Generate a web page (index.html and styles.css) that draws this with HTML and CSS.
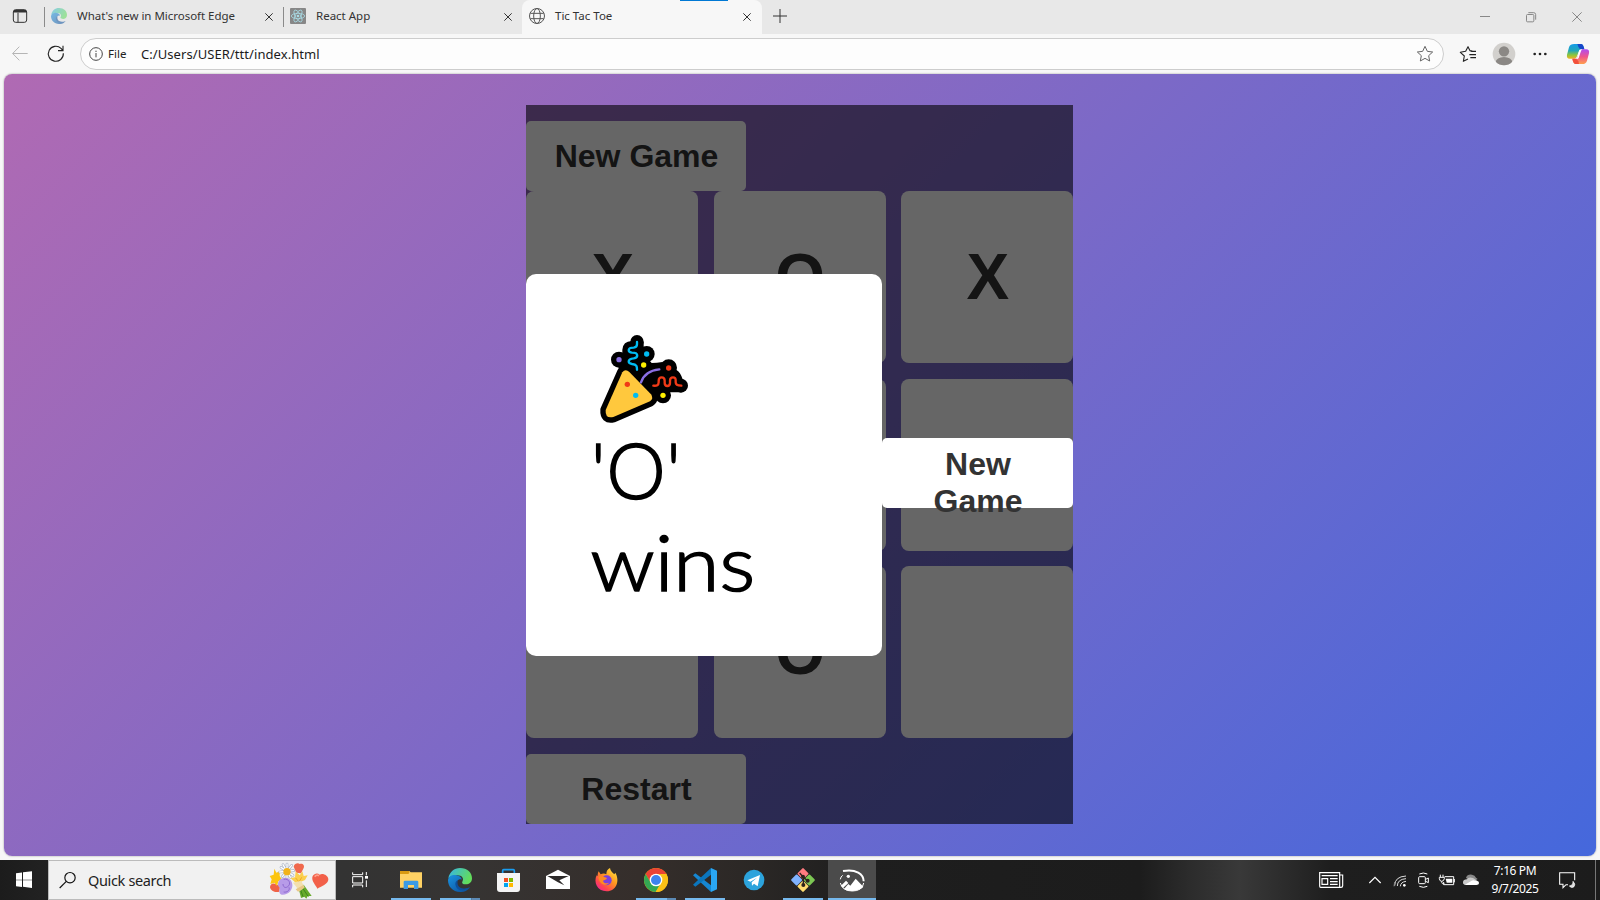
FILE: index.html
```html
<!DOCTYPE html>
<html lang="en">
<head>
<meta charset="utf-8">
<title>Tic Tac Toe</title>
<link rel="stylesheet" href="styles.css">
</head>
<body>
<header class="tabstrip">
  <svg class="tab-menu" viewBox="0 0 132 102" fill="none" stroke="#333" stroke-width="3"><rect x="40" y="29" width="40" height="38" rx="7"/><path d="M40 36h40M54 38v29" /><path d="M42 33h36" stroke-width="6"/></svg>
  <div class="tab">
    <svg class="favicon" viewBox="0 0 72 72"><defs><linearGradient id="eg" x1="0" y1="0" x2="1" y2=".4"><stop offset="0" stop-color="#36b4e8"/><stop offset="1" stop-color="#62dc5c"/></linearGradient><linearGradient id="eb" x1="0" y1="0" x2="1" y2="1"><stop offset="0" stop-color="#1a93e0"/><stop offset="1" stop-color="#0b4a96"/></linearGradient>
    <g id="edge"><path d="M1 30C5 12 18 0 36 0c22 0 36 14 36 31 0 12-9 18-18 18-10 0-13-4-11-8 6-10-2-19-14-19C17 22 6 26 1 30z" fill="url(#eg)"/><path d="M0 36c3-14 17-16 25-14 10 1 16 7 16 13-9-4-18 5-14 16 5 14 22 16 39 7C57 70 47 73 36 72 14 71 0 56 0 36z" fill="url(#eb)"/><path d="M29 37c-8 4-9 13-3 22 8 11 26 10 40-1-16 8-35 3-37-10-1-4 0-8 0-11z" fill="#0d4f9c"/></g></defs><use href="#edge"/></svg>
    <span class="tab-title t-edge">What's new in Microsoft Edge</span>
    <svg class="x" viewBox="0 0 30 30"><path d="M4 4l22 22M26 4L4 26"/></svg>
  </div>
  <div class="tab">
    <svg class="favicon gray" viewBox="0 0 48 48"><rect width="48" height="48" rx="3" fill="#878787"/><g fill="none" stroke="#a9dce6" stroke-width="2.4"><ellipse cx="24" cy="24" rx="20" ry="8"/><ellipse cx="24" cy="24" rx="20" ry="8" transform="rotate(60 24 24)"/><ellipse cx="24" cy="24" rx="20" ry="8" transform="rotate(120 24 24)"/></g><circle cx="24" cy="24" r="4" fill="#a9dce6"/></svg>
    <span class="tab-title">React App</span>
    <svg class="x" viewBox="0 0 30 30"><path d="M4 4l22 22M26 4L4 26"/></svg>
  </div>
  <div class="tab active">
    <svg class="favicon globe" viewBox="0 0 48 48" fill="none" stroke="#555" stroke-width="3"><circle cx="24" cy="24" r="22.5"/><ellipse cx="24" cy="24" rx="10" ry="22.5"/><path d="M4 16h40M4 32h40"/></svg>
    <span class="tab-title">Tic Tac Toe</span>
    <svg class="x" viewBox="0 0 30 30"><path d="M4 4l22 22M26 4L4 26"/></svg>
  </div>
  <svg class="plus" viewBox="0 0 42 42"><path d="M21 0v42M0 21h42" stroke="#333" stroke-width="3"/></svg>
  <div class="controls">
    <svg viewBox="246 0 138 102"><path d="M300 49.500h30"/></svg>
    <svg viewBox="384 0 138 102"><rect x="439.500" y="43.500" width="22" height="22" rx="3"/><path d="M445 38h16q6 0 6 6v15"/></svg>
    <svg viewBox="522 0 138 102"><path d="M577 37l28 28M605 37l-28 28"/></svg>
  </div>
</header>
<div class="toolbar">
  <svg class="tool" viewBox="0 102 120 120" fill="none" stroke="#b5b5b5" stroke-width="3"><path d="M83 160.500H38M58 140l-20 20.500 20 20.500"/></svg>
  <svg class="tool" viewBox="120 102 120 120" fill="none" stroke="#222" stroke-width="3.300"><path d="M190 160a22.500 22.500 0 1 1-7-15l6 7M189 137v15h-15"/></svg>
  <div class="address">
    <svg class="info" viewBox="0 0 42 42" fill="none" stroke="#444" stroke-width="3"><circle cx="21" cy="21" r="19"/><path d="M21 18v13M21 11v4"/></svg>
    <span class="scheme">File</span>
    <span class="url">C:/Users/USER/ttt/index.html</span>
    <svg class="star" viewBox="108 136 54 54" fill="none" stroke="#666" stroke-width="3" stroke-linejoin="round"><path d="M135 140l7 15 16 2-12 11 3 16-14-8-14 8 3-16-12-11 16-2z"/></svg>
  </div>
  <svg class="tool" viewBox="192 102 120 120" fill="none" stroke="#222" stroke-width="3.300" stroke-linejoin="round"><path d="M277 153l-7-1-6-12-7 14-16 3 12 11-3 16 14-7M272 154h16M268 164h20M271 173h17"/></svg>
  <svg class="tool" viewBox="312 102 120 120"><clipPath id="av"><circle cx="372" cy="162" r="34"/></clipPath><circle cx="372" cy="162" r="34" fill="#d2d0cd"/><g fill="#8b8885"><circle cx="372" cy="154" r="15.500"/><ellipse cx="372" cy="187" rx="25" ry="16" clip-path="url(#av)"/></g></svg>
  <svg class="tool dots" viewBox="432 102 108 120" fill="#222"><circle cx="464" cy="162" r="4"/><circle cx="480" cy="162" r="4"/><circle cx="496" cy="162" r="4"/></svg>
  <svg class="tool" viewBox="540 102 120 120"><defs><linearGradient id="c1" x1="0" y1="0" x2="0" y2="1"><stop offset="0" stop-color="#159be8"/><stop offset=".45" stop-color="#22a7b8"/><stop offset=".75" stop-color="#8cc63c"/><stop offset="1" stop-color="#f0b323"/></linearGradient><linearGradient id="c2" x1="0" y1="0" x2="0" y2="1"><stop offset="0" stop-color="#b04cf0"/><stop offset=".5" stop-color="#f0568c"/><stop offset="1" stop-color="#ffa04d"/></linearGradient></defs><path d="M583 132h20q7 0 10 16h-9q-6 0-8 7l-5 14q-2 7-8 7h-14q-10 0-8-12l6-22q3-10 16-10z" fill="url(#c1)"/><path d="M592 132h11q7 0 10 16h-8q-7 0-10-8z" fill="#1747c9"/><path d="M607 192h-20q-7 0-10-16h9q5 0 7-7l6-14q2-7 8-7h12q10 0 8 12l-6 22q-3 10-14 10z" fill="url(#c2)"/><path d="M597 192h-10q-7 0-10-16h8q7 0 10 8z" fill="#f2503c"/><path d="M598 150q5-2 9-2-4 3-5 8l-6 18q-2 4-8 3 4-3 5-8z" fill="#fff"/></svg>
</div>

<div class="frame">
<main class="page">
  <div class="game">
    <button class="btn">New Game</button>
    <div class="board">
      <div class="cell">X</div><div class="cell">O</div><div class="cell">X</div>
      <div class="cell"></div><div class="cell"></div><div class="cell"></div>
      <div class="cell"></div><div class="cell">O</div><div class="cell"></div>
    </div>
    <button class="btn restart">Restart</button>
    <div class="overlay">
      <div class="message">
        <svg class="popper" viewBox="246 35 300 270">
          <path d="M337 156Q346 144 358 155L423 222Q432 235 420 243L310 290Q285 296 287 269z" stroke="#000" stroke-width="32" stroke-linejoin="round"/>
          <circle cx="327" cy="118" r="24"/><circle cx="410" cy="101" r="24"/><circle cx="381" cy="64" r="20"/><circle cx="476" cy="142" r="25"/><circle cx="513" cy="196" r="21"/><circle cx="459" cy="225" r="24"/>
          <path d="M337 98V88Q339 63 365 62L401 64V100L425 128Q441 128 457 125L499 149Q511 155 518 177L514 216H480L440 240H400L326 155V138Q332 139 337 130z"/>
          <path d="M337 156Q346 144 358 155L423 222Q432 235 420 243L310 290Q285 296 287 269z" fill="#ffc83d"/>
          <g fill="none" stroke-linecap="round" stroke-width="7"><path d="M381 65v7q0 9-10 10c-20 0-18 14-5 15 20 0 20 14 5 17-20 2-18 15-5 17 15 1 15 8 15 17" stroke="#00bcf2"/><path d="M393 186Q404 152 448 147" stroke="#8b6fe3"/><path d="M430 196q16 2 16-10v-5q0-10 9-10t9 10v7q0 9 8 9t8-9v-7q0-10 9-10t8 10v5q0 10 17 10" stroke="#f03a17"/></g>
          <circle cx="327" cy="118" r="8" fill="#8b6fe3"/><g fill="#00bcf2"><circle cx="410" cy="101" r="8"/><circle cx="377" cy="225" r="8"/></g><g fill="#fff100"><circle cx="401" cy="134" r="8"/><circle cx="459" cy="225" r="8"/></g><g fill="#f03a17"><circle cx="476" cy="143" r="8"/><circle cx="352" cy="192" r="8"/></g>
        </svg>
        <div class="line line-o">'O'</div>
        <div class="line line-w">wins</div>
      </div>
      <button class="btn again">New Game</button>
    </div>
  </div>
</main>
</div>

<footer class="taskbar">
  <svg class="start" viewBox="0 30 144 120" fill="#fff"><path d="M48 70l18-2.500V89H48zM69 67l27-3v25H69zM48 91h18v20l-18-2.500zM69 91h27v23l-27-3.500z"/></svg>
  <div class="search">
    <svg class="lens" viewBox="175 60 60 60" fill="none" stroke="#111" stroke-width="3.500"><circle cx="211" cy="83" r="15.500"/><path d="M200 94l-20 20"/></svg>
    <span class="search-text">Quick search</span>
    <svg class="flowers" viewBox="800 33 200 114">
      <path d="M894 112l8 32 10-4 6 6 4-8 12 0-24-34z" fill="#67ab2a"/><path d="M898 112l10 28M904 110l20 30" stroke="#3f8420" stroke-width="3" fill="none"/>
      <path d="M880 50c2-10 14-12 18-8 8-4 16 4 12 12l-8 16-14-2z" fill="#f0694d"/>
      <path d="M809 112c0-10 10-14 18-9l12 4-2 18c-12 4-26-2-28-13z" fill="#ef6247"/>
      <path d="M822 56l6 12 10-4v14l6 10-10 6-4 14-8-10-12 4 4-14-6-10 12-4z" fill="#fcc510"/>
      <g fill="none" stroke="#aab4c4" stroke-width="8" stroke-linecap="round"><path d="M860 42v42M842 52l36 24M838 66l42-4M846 80l28-34M848 44l22 38"/></g><g stroke="#fff" stroke-width="4" stroke-linecap="round"><path d="M860 42v42M842 52l36 24M838 66l42-4M846 80l28-34M848 44l22 38"/></g><circle cx="860" cy="65" r="11" fill="#f2b21a"/>
      <path d="M870 84l14-2 2-18 12 12 8-12 4 14 12-2-8 14-14 6-14 2z" fill="#fbcf4d"/><path d="M886 84l10 12 8-14" fill="none" stroke="#efaa23" stroke-width="3"/>
      <path d="M878 98l24-6 10 18-14 14z" fill="#f3dfae"/><path d="M886 118l22-12 5 7-20 12z" fill="#e8c784"/>
      <path d="M836 92c12-14 34-10 39 6 6 20-12 38-31 36-8-2-8-12-5-20-7-6-8-14-3-22z" fill="#b79be8"/><path d="M850 88c16-4 24 14 12 22-8 6-14 0-14-8M866 112c4 10-8 16-16 14" fill="none" stroke="#8d68cf" stroke-width="3"/>
      <path d="M937 78c5-8 15-10 21-4 10-5 25 2 26 14 0 14-22 22-33 28-4-10-20-24-14-38z" fill="#f26049"/><path d="M943 80c4-5 9-5 13-3" stroke="#ffa08a" stroke-width="5" fill="none"/>
    </svg>
  </div>
  <svg class="taskview" viewBox="1008 30 153 120" fill="none" stroke="#fff" stroke-width="3"><path d="M1058 67v7h30v-7M1058 112v-7h30v7M1058 80h30v19h-30zM1099 66v10M1099 91v20"/><path d="M1095 82h9" stroke-width="8"/></svg>

  <svg class="app" viewBox="21 30 147 120"><path d="M60 63h28l4 4h34v46H60z" fill="#ffd264"/><path d="M60 63h28v6l-3 3H60z" fill="#d99a12"/><path d="M71 117V96q0-4 4-4h36q4 0 4 4v21h-13v-12H84v12z" fill="#3a9ae4"/><path class="run" d="M33 144h120v6H33z"/></svg>
  <svg class="app" viewBox="168 30 147 120"><use href="#edge" x="204" y="54"/><path class="run" d="M180 144h94v6h-94z"/><path d="M274 144h26v6h-26z" fill="#5c8ab5"/></svg>
  <svg class="app" viewBox="315 30 147 120"><path d="M368 72V62q0-3 3-3h29q3 0 3 3v10" fill="none" stroke="#1a9df0" stroke-width="5"/><path d="M351 69h69v48q0 9-9 9h-51q-9 0-9-9z" fill="#f4f4f4"/><path d="M372 84h12v12h-12z" fill="#f25022"/><path d="M387 84h12v12h-12z" fill="#7fba00"/><path d="M372 99h12v12h-12z" fill="#00a4ef"/><path d="M387 99h12v12h-12z" fill="#ffb900"/></svg>
  <svg class="app" viewBox="462 30 147 120"><path d="M498 78l36-19 36 19v39h-72z" fill="#fff"/><path d="M502 78h64l-28 13 15 15-19-9z" fill="#2d2a29"/></svg>
  <svg class="app" viewBox="609 30 147 120"><defs><linearGradient id="ff" x1="1" y1="0" x2=".2" y2="1"><stop offset="0" stop-color="#fff04a"/><stop offset=".45" stop-color="#ff9a1f"/><stop offset=".8" stop-color="#ff4450"/><stop offset="1" stop-color="#f0249a"/></linearGradient></defs><path d="M656 64l6 9c6-3 12-3 17 0 0-10 4-16 11-19 1 9 7 13 13 19l3-5c14 24 4 55-26 56-29 0-40-28-30-48l3 2c0-6 1-10 3-14z" fill="url(#ff)"/><circle cx="680" cy="91" r="15" fill="#7a3fe0"/><path d="M655 80c8-4 15 0 19 2 6 1 9 2 5 6l-10 4c2 8 10 10 18 6-8 12-30 6-32-18z" fill="#ff8a22"/></svg>
  <svg class="app" viewBox="-24 30 147 120"><g transform="translate(48 90)"><circle r="36" fill="#fbbc05"/><path d="M-31.200-18A36 36 0 0 1 31.200-18H0L-15.600 9z" fill="#ea4335"/><path d="M-31.200-18L-14 11 0 18 14 10-1 36A36 36 0 0 1-31.200-18z" fill="#34a853"/><path d="M31.200-18A36 36 0 0 1-1 36L15 10V-18z" fill="#fbc116"/><circle r="19" fill="#fff"/><circle r="15" fill="#3d83ee"/></g><path class="run" d="M-12 144h93v6h-93z"/><path d="M81 144h27v6H81z" fill="#5c8ab5"/></svg>
  <svg class="app" viewBox="123 30 147 120"><path d="M159 76l7-6 51 39-4 17z" fill="#1687d2"/><path d="M159 104l7 6 51-39-4-17z" fill="#0b76bd"/><path d="M213 54l18 8v56l-18 8z" fill="#2aa6f2"/><path class="run" d="M135 144h120v6H135z"/></svg>
  <svg class="app" viewBox="270 30 147 120"><circle cx="342" cy="90" r="31" fill="#2ca3dc"/><path d="M322 91l38-16-7 34-11-8-6 6-1-10 16-14-20 12z" fill="#fff"/></svg>
  <svg class="app" viewBox="417 30 147 120"><g transform="rotate(45 489 90)"><rect x="463" y="64" width="25" height="25" rx="3" fill="#ff7b80"/><rect x="490" y="64" width="25" height="25" rx="3" fill="#7cc653"/><rect x="463" y="91" width="25" height="25" rx="3" fill="#80b3ff"/><rect x="490" y="91" width="25" height="25" rx="3" fill="#ffdc70"/></g><path d="M479 69l11 13v23M490 81l12 11" fill="none" stroke="#2b211d" stroke-width="4"/><g fill="#2b211d"><circle cx="489" cy="80" r="6"/><circle cx="490" cy="105" r="6"/><circle cx="503" cy="92" r="6"/></g><path class="run" d="M429 144h120v6H429z"/></svg>
  <svg class="app on" viewBox="564 30 144 120"><path d="M609 63C648 56 671 72 671 94" fill="none" stroke="#fff" stroke-width="6"/><path d="M601 88q1-8 7-12M601 99q6 24 36 24t34-24" fill="none" stroke="#fff" stroke-width="3"/><circle cx="625" cy="79" r="5" fill="#fff"/><path d="M603 107l15-15 7 7-16 15zM612 117l13-15 6 5 16-21 23 24c-8 12-46 18-58 7z" fill="#fff"/><path class="run" d="M564 144h144v6H564z"/></svg>

  <div class="tray">
    <svg class="news" viewBox="30 30 135 120" fill="none" stroke="#fff" stroke-width="3.500"><path d="M59 68h60v44H62q-3 0-3-4zM119 75h9v32q0 5-5 5h-6M65 77h48M66 86h17v17H66zM90 86h23M90 95h23M90 103h23"/></svg>
    <svg class="chev" viewBox="180 30 90 120" fill="none" stroke="#fff" stroke-width="3.500"><path d="M208 99l17-17 17 17"/></svg>
    <svg class="wifi" viewBox="270 30 60 120" fill="none" stroke="#ddd" stroke-width="3"><path d="M284 107q0-27 34-29M292 108q0-20 26-22M301 109q1-13 17-15"/><path d="M284 96l-2 13" stroke="#888"/><circle cx="313" cy="106" r="4" fill="#fff" stroke="none"/></svg>
    <svg class="meet" viewBox="330 30 75 120" fill="none" stroke="#fff" stroke-width="3"><rect x="356" y="80" width="20" height="21" rx="3"/><path d="M377 88l8-4v14l-8-4M358 72q12-6 24 0M358 109q12 6 24 0"/></svg>
    <svg class="meet" viewBox="405 30 75 120" fill="none" stroke="#fff" stroke-width="3"><path d="M434 80h27v24h-30v-8M463 87v10M421 74v7M429 74v7M418 82h15v4q-2 8-8 8t-7-8zM425 94q0 10 8 7"/><path d="M437 86h20v12h-17z" fill="#fff" stroke="none"/></svg>
    <svg class="cloud" viewBox="480 30 66 120"><path d="M498 83q4-11 18-9 9 1 12 9l5 4-20 12z" fill="#888"/><path d="M497 105q-9-1-8-9 1-8 12-8 5-9 18-4l18 12-10 9z" fill="#c8c8c8"/><path d="M495 104l20-12q5-3 10 0 12 0 12 8 0 5-8 5h-30z" fill="#fff"/></svg>
    <div class="clock"><span class="time">7:16 PM</span><span class="date">9/7/2025</span></div>
    <svg class="note" viewBox="744 30 141 120" fill="none" stroke="#fff" stroke-width="3.200"><path d="M824 91V68h-45v35h10v10l9-9h6"/><path d="M808 108q12-2 11-14 9 9 3 16-7 6-14-2z" fill="#ddd" stroke-width="2"/></svg>
    <div class="peek"></div>
  </div>
</footer>
</body>
</html>
```
FILE: styles.css
```css
* { box-sizing: border-box; }
body {
  margin: 0;
  width: 1600px;
  height: 900px;
  overflow: hidden;
  display: flex;
  flex-direction: column;
  background: #f7f7f7;
  font-family: "Noto Sans", "Open Sans", sans-serif;
  color: #333;
}
svg { display: block; flex: none; }

.tabstrip { display: flex; height: 34px; background: #e8e8e8; }
.tab-menu { width: 44px; height: 34px; }
.tab {
  position: relative;
  display: flex;
  align-items: center;
  width: 239px;
  height: 34px;
  padding: 0 9.500px 2px 7px;
}
.tab:not(.active)::before {
  content: "";
  position: absolute;
  left: 0;
  top: 7px;
  width: 1px;
  height: 20px;
  background: #8a8a8a;
}
.tab.active {
  width: 240px;
  padding-right: 10.500px;
  background: #f7f7f7;
  border-radius: 8px 8px 0 0;
}
.tab.active::after {
  content: "";
  position: absolute;
  left: 158px;
  top: 0;
  width: 48px;
  height: 1px;
  background: #0078d4;
}
.favicon { width: 16px; height: 16px; opacity: .55; }
.favicon.gray, .favicon.globe { opacity: 1; }
.tab-title { margin-left: 10px; font-size: 11.500px; line-height: 16px; white-space: nowrap; }
.t-edge { letter-spacing: -.03px; }
.x { width: 10px; height: 10px; margin-left: auto; stroke: #333; stroke-width: 3; margin-top: 2px; }
.plus { width: 14px; height: 14px; margin: 9px 0 0 10.500px; }
.controls { display: flex; margin-left: auto; }
.controls svg { width: 46px; height: 34px; fill: none; stroke: #888; stroke-width: 3; }

.toolbar { display: flex; height: 40px; background: #f7f7f7; }
.tool { width: 40px; height: 40px; }
.dots { width: 36px; }
.address {
  display: flex;
  align-items: center;
  flex: 1;
  height: 32px;
  margin-top: 4px;
  padding: 0 9px 0 8px;
  background: #fdfdfd;
  border: 1px solid #cdcdcd;
  border-radius: 16px;
}
.info { width: 14px; height: 14px; }
.scheme { margin-left: 5px; width: 33px; padding-bottom: 1px; font-size: 11.500px; color: #222; }
.url { font-size: 13px; letter-spacing: .07px; color: #1b1b1b; }
.star { width: 18px; height: 18px; margin-left: auto; }

.frame { height: 786px; padding: 0 4px 4px; }
.page {
  display: flex;
  flex-direction: column;
  align-items: center;
  height: 782px;
  padding-top: 31.300px;
  border-radius: 8px;
  background: linear-gradient(135deg, #b06ab3, #4568dc);
  box-shadow: 0 0 2px rgba(0, 0, 0, .4);
}
.game {
  position: relative;
  display: flex;
  flex-direction: column;
  align-items: flex-start;
  width: 547px;
  margin-right: 1px;
  padding-top: 15.800px;
}
.btn {
  display: flex;
  align-items: center;
  justify-content: center;
  width: 220px;
  height: 70.300px;
  padding: 0 0 0 1px;
  border: 0;
  border-radius: 5px;
  background: #fff;
  color: #333;
  font: bold 32px/37px "Liberation Sans", Arial, sans-serif;
}
.board {
  display: grid;
  grid-template-columns: repeat(3, 172px);
  grid-auto-rows: 172px;
  gap: 15.500px;
}
.cell {
  display: flex;
  align-items: center;
  justify-content: center;
  padding-left: 1.500px;
  background: #fff;
  border-radius: 8px;
  font: bold 64px/1 "Liberation Sans", Arial, sans-serif;
}
.restart { margin-top: 15.600px; }
.overlay {
  position: absolute;
  inset: 0;
  display: flex;
  align-items: center;
  background: rgba(0, 0, 0, .6);
}
.message {
  width: 356px;
  height: 382.500px;
  padding: 58px 0 0 66px;
  border-radius: 10px;
  background: #fff;
}
.popper { width: 100px; height: 90px; overflow: visible; }
.line {
  width: max-content;
  color: #000;
  font: 300 77px/92px Lato, sans-serif;
  -webkit-text-stroke: 1.700px #000;
  transform-origin: 0 50%;
}
.line-o { letter-spacing: .8px; transform: translate(-1px, 1px) scaleX(.97); }
.line-w { transform: translate(-1.500px, .5px) scaleX(1.09); }
.again { flex: 1; margin-top: 16px; padding: 20px 40px 0 41px; }

.taskbar {
  display: flex;
  height: 40px;
  background: linear-gradient(90deg, #1c1c1c 0, #222 48px, #333 340px, #363433 460px, #352e2b 640px, #2a2725 760px, #1e1e1e 860px, #1c1c1c 1140px, #2c2c2c 1190px, #393939 1240px, #2a2a2a 1290px, #1e1e1e 1330px, #1c1c1c 1600px);
}
.start { width: 48px; height: 40px; }
.search {
  display: flex;
  align-items: center;
  width: 288px;
  height: 40px;
  padding-left: 9px;
  background: #f1f1f1;
  border: 1px solid #bbb;
}
.lens { width: 20px; height: 20px; }
.search-text { margin-left: 10px; width: 179px; font-size: 14.500px; letter-spacing: -.35px; color: #222; }
.flowers { width: 66.700px; height: 38px; }
.taskview { width: 51px; height: 40px; }
.app { width: 49px; height: 40px; }
.app.on { width: 48px; background: #4b4b4b; }
.run { fill: #76b9ed; }
.tray { display: flex; margin-left: auto; height: 40px; }
.news { width: 45px; height: 40px; }
.chev { width: 30px; height: 40px; margin-left: 5px; }
.wifi { width: 20px; height: 40px; }
.meet { width: 25px; height: 40px; }
.cloud { width: 22px; height: 40px; }
.clock {
  display: flex;
  flex-direction: column;
  align-items: center;
  width: 66px;
  padding-top: 2px;
  color: #fff;
  font-size: 12px;
  letter-spacing: -.4px;
  line-height: 18px;
}
.note { width: 47px; height: 40px; }
.peek { width: 5px; border-left: 1px solid #777; }
```
